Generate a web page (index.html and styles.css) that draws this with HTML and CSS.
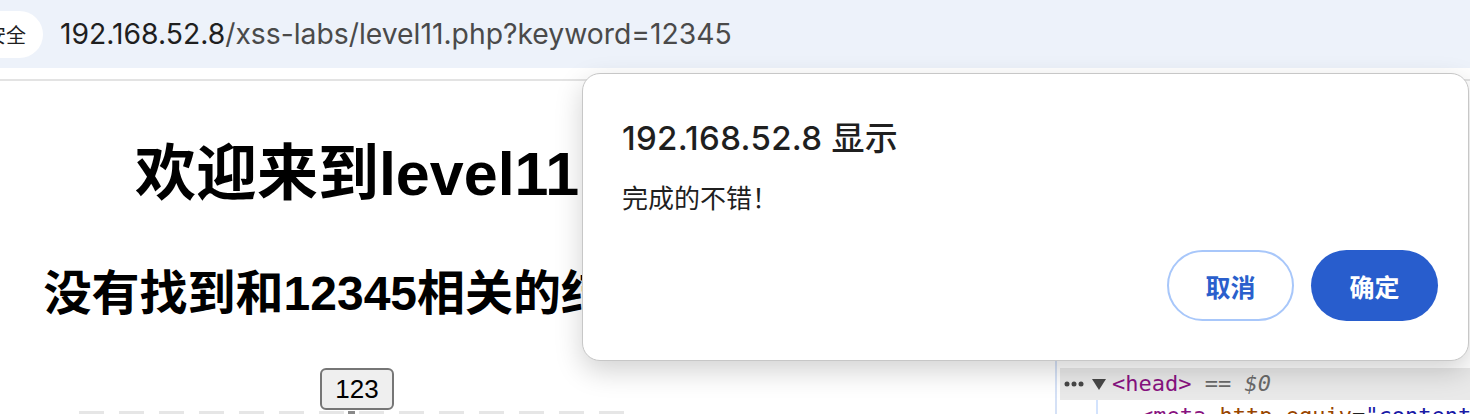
FILE: index.html
```html
<!DOCTYPE html>
<html lang="zh-CN">
<head>
<meta charset="utf-8">
<title>level11</title>
<link rel="stylesheet" href="styles.css">
</head>
<body>
<div class="window">
  <header class="toolbar">
    <span class="security-chip">不安全</span>
    <span class="url"><span class="url-host">192.168.52.8</span><span class="url-path">/xss-labs/level11.php?keyword=12345</span></span>
  </header>
  <div class="main">
    <main class="page">
      <div class="page-content">
        <h1 class="page-title">欢迎来到level11</h1>
        <h2 class="page-result">没有找到和12345相关的结果.</h2>
        <form class="search-form"><button type="button" class="form-button">123</button></form>
        <div class="image-strip"><span class="image-mark"></span></div>
      </div>
    </main>
    <aside class="devtools">
      <div class="dom-row dom-row-selected">
        <svg class="dots" width="20" height="6" viewBox="0 0 20 6"><circle cx="3" cy="3" r="2.5"/><circle cx="10" cy="3" r="2.5"/><circle cx="17" cy="3" r="2.5"/></svg>
        <svg class="caret" width="14" height="11" viewBox="0 0 14 11"><polygon points="0,0 14,0 7,11"/></svg>
        <span class="code"><span class="tag">&lt;head&gt;</span> <span class="eq">== <i>$0</i></span></span>
      </div>
      <div class="dom-children">
        <div class="dom-row"><span class="code"><span class="tag">&lt;meta</span> <span class="attr">http-equiv</span>=<span class="val">"content-type"</span> <span class="attr">content</span>=<span class="val">"text/html;charset=utf-8"</span><span class="tag">&gt;</span></span></div>
      </div>
    </aside>
  </div>
  <div class="dialog" role="alertdialog">
    <h2 class="dialog-title">192.168.52.8 显示</h2>
    <p class="dialog-message">完成的不错！</p>
    <div class="dialog-actions">
      <button type="button" class="btn btn-cancel">取消</button>
      <button type="button" class="btn btn-ok">确定</button>
    </div>
  </div>
</div>
</body>
</html>
```

FILE: styles.css
```css
* { box-sizing: border-box; }
html, body { margin: 0; padding: 0; }
body {
  width: 1470px;
  height: 414px;
  overflow: hidden;
  background: #fff;
  font-family: "Liberation Sans", "Noto Sans CJK SC", sans-serif;
  color: #000;
}
.window {
  position: relative;
  width: 1470px;
  height: 414px;
  overflow: hidden;
}
.toolbar {
  height: 68px;
  background: #edf2fa;
  display: flex;
  align-items: center;
}
.security-chip {
  margin-left: -50px;
  height: 47px;
  padding: 0 17px 0 16px;
  background: #fff;
  border-radius: 24px;
  display: flex;
  align-items: center;
  font: 20px "Noto Sans CJK SC", sans-serif;
  color: #1f1f1f;
  white-space: nowrap;
}
.url {
  margin-left: 17px;
  font: 28.3px Inter, "Liberation Sans", sans-serif;
  color: #4a4a4a;
  white-space: nowrap;
}
.url-host { color: #1f1f1f; }

.main {
  margin-top: 11px;
  border-top: 2px solid #e3e3e3;
  display: flex;
  height: 335px;
}
.page { width: 1055px; flex: none; }
.page-content {
  width: 714px;
  text-align: center;
}
.page-title {
  margin: 57px 0 0;
  font-size: 61px;
  line-height: 72px;
  font-weight: 700;
  white-space: nowrap;
}
.page-result {
  margin: 55px 0 0;
  font-size: 48px;
  line-height: 58px;
  font-weight: 700;
  white-space: nowrap;
}
.search-form { margin: 45px 0 0; }
.form-button {
  height: 42px;
  padding: 0 13px;
  border: 2px solid #767676;
  border-radius: 6px;
  background: #efefef;
  font: 26px "Liberation Sans", sans-serif;
  color: #000;
  vertical-align: top;
}
.image-strip {
  position: relative;
  width: 556px;
  height: 3px;
  margin: 1px auto 0;
  background: repeating-linear-gradient(90deg, #e6e6e6 0 25px, transparent 25px 40px);
}
.image-mark {
  position: absolute;
  left: 269px;
  top: 0;
  width: 7px;
  height: 3px;
  background: #8a8a8a;
}

.devtools {
  flex: 1;
  border-left: 2px solid #d5e1f6;
  padding-top: 287px;
  font: 22px "DejaVu Sans Mono", monospace;
  color: #1f1f1f;
}
.dom-row {
  height: 32px;
  display: flex;
  align-items: center;
  white-space: nowrap;
}
.dom-row-selected {
  margin-left: 3px;
  padding-left: 4px;
  background: #e9e9e9;
}
.dots { fill: #474747; flex: none; }
.caret { fill: #474747; margin-left: 8px; margin-right: 6px; flex: none; }
.code { line-height: 32px; }
.tag { color: #881280; }
.attr { color: #994500; }
.val { color: #1a1aa6; }
.eq { color: #6a6a6a; }
.dom-children {
  margin-left: 39px;
  border-left: 2px solid #d3e3fd;
  padding-left: 42px;
}

.dialog {
  position: absolute;
  left: 582px;
  top: 73px;
  width: 887px;
  height: 288px;
  background: #fff;
  border: 1px solid #c7c7c7;
  border-radius: 18px;
  box-shadow: 0 10px 28px rgba(0, 0, 0, 0.18);
  padding: 44px 30px 39px 39px;
  display: flex;
  flex-direction: column;
}
.dialog-title {
  margin: 0;
  font: 500 33px/40px Inter, "Noto Sans CJK SC", sans-serif;
  letter-spacing: 0.3px;
  color: #1f1f1f;
}
.dialog-message {
  margin: 23px 0 0;
  font: 26px/36px Inter, "Noto Sans CJK SC", sans-serif;
  color: #1f1f1f;
}
.dialog-actions {
  margin-top: auto;
  display: flex;
  justify-content: flex-end;
  gap: 17px;
}
.btn {
  width: 127px;
  height: 71px;
  border-radius: 36px;
  font: 700 25px "Noto Sans CJK SC", sans-serif;
  padding: 0;
}
.btn-cancel {
  background: #fff;
  border: 2px solid #a8c7fa;
  color: #2a5fcc;
}
.btn-ok {
  background: #285dcd;
  border: none;
  color: #fff;
}
```
